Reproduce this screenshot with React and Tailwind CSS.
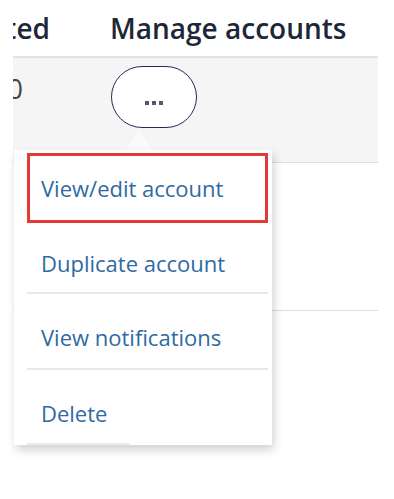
import React from "react";

export default function App() {
  const items = ["View/edit account", "Duplicate account", "View notifications", "Delete"];
  return (
    <div className="relative w-[394px] h-[499px] bg-white overflow-hidden" style={{ fontFamily: '"Open Sans", "Noto Sans", sans-serif' }}>
      <div className="ml-[13px] w-[365px]">
        {/* header */}
        <div className="h-[58px] flex items-end pb-[14px] border-b-[2px] border-[#e3e3e3] text-[28px] font-semibold text-[#1d2738] leading-none">
          <div className="w-[37px] overflow-hidden flex justify-end">
            <span className="whitespace-nowrap">Created</span>
          </div>
          <div className="ml-[60px] whitespace-nowrap">Manage accounts</div>
        </div>
        {/* row 1 */}
        <div className="h-[105px] bg-[#f5f5f5] border-b border-[#dedede] flex items-start">
          <div className="w-[10px] mt-[17px] overflow-hidden flex justify-end text-[27px] text-[#444] leading-none">
            <span>0</span>
          </div>
          <div className="ml-[88px] mt-[8px] w-[86px] h-[62px] rounded-full border-[1.5px] border-[#1f2b5a] bg-white flex items-center justify-center">
            <div className="flex gap-[3px] mt-[12px]">
              <span className="w-[4px] h-[4px] bg-[#55586a]"></span>
              <span className="w-[4px] h-[4px] bg-[#55586a]"></span>
              <span className="w-[4px] h-[4px] bg-[#55586a]"></span>
            </div>
          </div>
        </div>
        {/* row 2 */}
        <div className="h-[148px] border-b border-[#dedede]"></div>
      </div>

      {/* arrow */}
      <div className="absolute left-[125px] top-[130px] w-0 h-0 border-l-[14px] border-r-[14px] border-b-[21px] border-l-transparent border-r-transparent border-b-[#fafafa]"></div>

      {/* menu */}
      <div className="absolute left-[14px] top-[150px] w-[258px] bg-white shadow-[2px_5px_9px_rgba(0,0,0,0.18)] pl-[13px] pr-[4px] pt-[3px]">
        <div className="h-[70px] flex items-center pl-[11px] border-[3px] border-[#e53935] text-[22px] text-[#2f6aa3]">
          {items[0]}
        </div>
        <div className="h-[71px] flex items-center pt-[12px] pl-[14px] border-b-[2px] border-[#e8e8e8] text-[22px] text-[#2f6aa3]">
          {items[1]}
        </div>
        <div className="h-[76px] flex items-center pt-[12px] pl-[14px] border-b-[2px] border-[#e8e8e8] text-[22px] text-[#2f6aa3]">
          {items[2]}
        </div>
        <div className="h-[75px] flex items-center pt-[12px] pl-[14px] text-[22px] text-[#2f6aa3]">
          {items[3]}
        </div>
        <div className="h-[2px] w-[103px] bg-[#ececec] -mt-[2px]"></div>
      </div>
    </div>
  );
}
